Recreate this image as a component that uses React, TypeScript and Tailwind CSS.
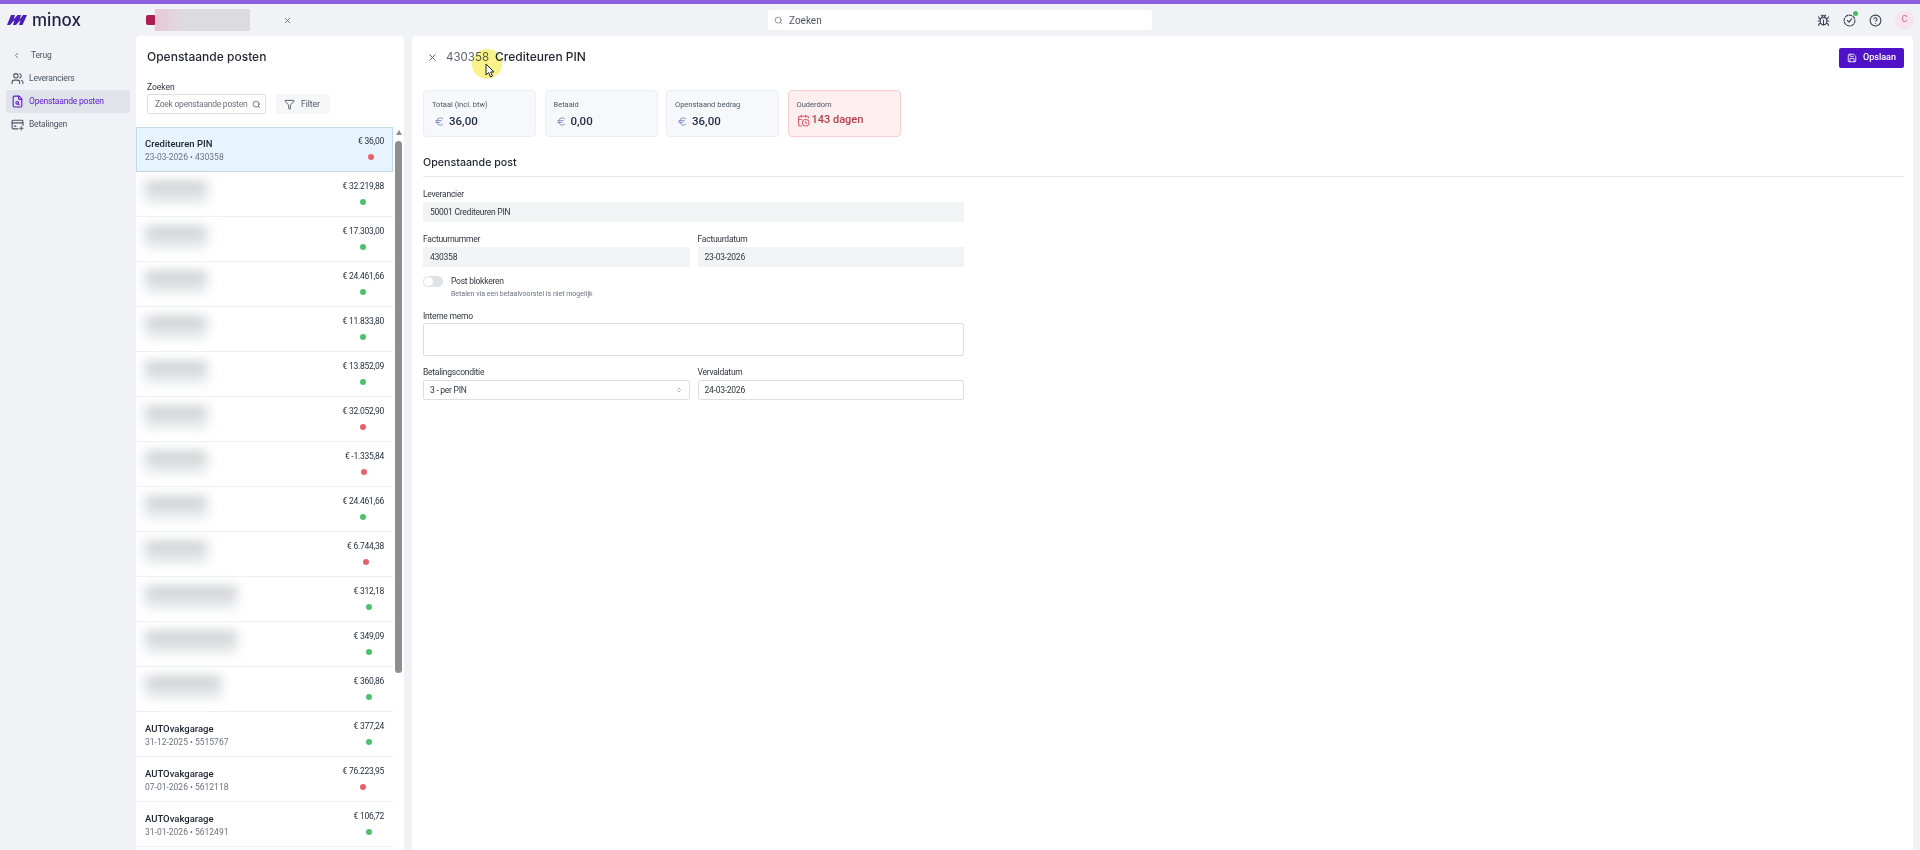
import {
  Bug,
  CalendarClock,
  ChevronLeft,
  ChevronsUpDown,
  CircleHelp,
  Euro,
  FileSearch,
  Funnel,
  Save,
  Search,
  Users,
  X,
} from "lucide-react";

type Row = {
  name?: string;
  sub?: string;
  amount: string;
  ok: boolean;
  blur?: number;
};

const rows: Row[] = [
  { amount: "€ 32.219,88", ok: true, blur: 62 },
  { amount: "€ 17.303,00", ok: true, blur: 62 },
  { amount: "€ 24.461,66", ok: true, blur: 62 },
  { amount: "€ 11.833,80", ok: true, blur: 62 },
  { amount: "€ 13.852,09", ok: true, blur: 62 },
  { amount: "€ 32.052,90", ok: false, blur: 62 },
  { amount: "€ -1.335,84", ok: false, blur: 62 },
  { amount: "€ 24.461,66", ok: true, blur: 62 },
  { amount: "€ 6.744,38", ok: false, blur: 62 },
  { amount: "€ 312,18", ok: true, blur: 92 },
  { amount: "€ 349,09", ok: true, blur: 92 },
  { amount: "€ 360,86", ok: true, blur: 76 },
  { name: "AUTOvakgarage", sub: "31-12-2025 • 5515767", amount: "€ 377,24", ok: true },
  { name: "AUTOvakgarage", sub: "07-01-2026 • 5612118", amount: "€ 76.223,95", ok: false },
  { name: "AUTOvakgarage", sub: "31-01-2026 • 5612491", amount: "€ 106,72", ok: true },
];

function Amount({ value, ok }: { value: string; ok: boolean }) {
  return (
    <div className="flex flex-col items-center gap-[7px] pt-[1px]">
      <span className="text-[8.5px] leading-[12px] text-[#27303f] tracking-[-0.25px]">{value}</span>
      <span className={`w-[6px] h-[6px] rounded-full ${ok ? "bg-[#4fbf6c]" : "bg-[#e8606c]"}`} />
    </div>
  );
}

function ListRow({ row }: { row: Row }) {
  return (
    <div className="h-[45px] shrink-0 flex justify-between pl-[9px] pr-[9px] pt-[7px] border-b border-[#eef0f3] bg-white">
      {row.name ? (
        <div className="pt-[3px]">
          <div className="text-[9.5px] leading-[14px] font-medium text-[#1b2230]">{row.name}</div>
          <div className="text-[8.5px] leading-[13px] text-[#6b7280]">{row.sub}</div>
        </div>
      ) : (
        <div className="pt-[3px] blur-[6px] opacity-80" style={{ width: row.blur }}>
          <div className="h-[9px] bg-[#b5b7ba]" />
          <div className="h-[8px] mt-[3px] bg-[#d3d5d8]" />
        </div>
      )}
      <Amount value={row.amount} ok={row.ok} />
    </div>
  );
}

function Stat({ label, value }: { label: string; value: string }) {
  return (
    <div className="w-[113px] h-[47px] rounded-[4px] border border-[#eceef3] bg-[#f7f8fb] pl-[8px] pt-[9px]">
      <div className="text-[7.5px] leading-[10px] text-[#4b5563]">{label}</div>
      <div className="flex items-center gap-[4px] pl-[2px] mt-[3px]">
        <Euro size={11} className="text-[#7b8fc0]" />
        <span className="text-[11.5px] leading-[16px] font-medium text-[#1f2b45]">{value}</span>
      </div>
    </div>
  );
}

function Label({ children }: { children: string }) {
  return <div className="text-[8.5px] leading-[12px] tracking-[-0.25px] text-[#30363f]">{children}</div>;
}

function ReadOnly({ label, value }: { label: string; value: string }) {
  return (
    <div className="flex-1">
      <Label>{label}</Label>
      <div className="mt-[2px] bg-[#f2f3f5] pl-[7px] text-[8.5px] tracking-[-0.25px] text-[#30363f] h-[20px] leading-[20px]">{value}</div>
    </div>
  );
}

export default function App() {
  return (
    <div className="relative h-[850px] overflow-hidden bg-[#f1f2f6] flex flex-col font-['Roboto','Liberation_Sans',sans-serif]">
      <div className="h-[4px] bg-[#8b5fe0]" />

      <header className="h-[32px] flex items-center shrink-0 relative">
        <div className="w-[146px] pl-[7px] flex items-center gap-[5px]">
          <svg width="20" height="10" viewBox="0 0 20 10">
            <path d="M0 10 L4 0 H8 L6.5 4.5 L10.5 0 H14 L12.5 4.5 L16 0 H20 L15.5 10 H12 L13.5 5 L9 10 H6 L7.5 5 L3 10 Z" fill="#4a1fb8" />
          </svg>
          <span className="text-[17px] leading-[20px] font-['Inter'] font-medium text-[#1d2340]">minox</span>
        </div>
        <div className="w-[10px] h-[10px] rounded-[2px] bg-[#a81f4f]" />
        <div className="w-[95px] h-[22px] ml-[-1px] bg-gradient-to-r from-[#e8c8d4] to-[#dcdcde] to-30%" />
        <X size={9} className="ml-[33px] text-[#4b5563]" />
        <div className="absolute left-[768px] top-[6px] w-[384px] h-[20px] bg-white rounded-[2px] flex items-center pl-[6px] gap-[6px]">
          <Search size={9} className="text-[#6b7280]" />
          <span className="text-[10px] text-[#4b5563]">Zoeken</span>
        </div>
        <div className="ml-auto flex items-center gap-[13px] pr-[6px]">
          <Bug size={13} className="text-[#3b4252]" />
          <div className="relative">
            <svg width="13" height="13" viewBox="0 0 24 24" fill="none" stroke="#3b4252" strokeWidth="2" strokeLinecap="round" strokeLinejoin="round">
              <circle cx="12" cy="12" r="10" strokeDasharray="5 2.5" />
              <path d="M8 12l3 3 5-6" />
            </svg>
            <span className="absolute -top-[3px] -right-[2px] w-[5px] h-[5px] rounded-full bg-[#3fc060]" />
          </div>
          <CircleHelp size={13} className="text-[#3b4252]" />
          <div className="w-[19px] h-[19px] rounded-full bg-[#f7e4ea] text-[#d86a88] text-[9px] flex items-center justify-center">C</div>
        </div>
      </header>

      <div className="flex flex-1 min-h-0">
        <nav className="w-[136px] shrink-0 pl-[6px] pr-[6px] pt-[8px] text-[8.5px] tracking-[-0.2px] text-[#4b5563]">
          <div className="h-[23px] flex items-center gap-[10px] pl-[6px]">
            <ChevronLeft size={9} />
            <span>Terug</span>
          </div>
          <div className="h-[23px] flex items-center gap-[5px] pl-[5px]">
            <Users size={13} />
            <span>Leveranciers</span>
          </div>
          <div className="h-[23px] flex items-center gap-[5px] pl-[5px] bg-[#e1e3ea] rounded-[2px] text-[#5b21c8]">
            <FileSearch size={13} />
            <span>Openstaande posten</span>
          </div>
          <div className="h-[23px] flex items-center gap-[5px] pl-[5px]">
            <svg width="13" height="13" viewBox="0 0 24 24" fill="none" stroke="currentColor" strokeWidth="2" strokeLinecap="round" strokeLinejoin="round">
              <path d="M13 20H4a2 2 0 0 1-2-2V6a2 2 0 0 1 2-2h16a2 2 0 0 1 2 2v8" />
              <path d="M2 9h20M6 15h3M19 16v6M16 19h6" />
            </svg>
            <span>Betalingen</span>
          </div>
        </nav>

        <section className="w-[268px] shrink-0 bg-white rounded-t-[4px] flex flex-col min-h-0">
          <div className="h-[91px] shrink-0 pl-[11px]">
            <h1 className="pt-[12px] text-[12px] leading-[18px] font-['Inter'] font-medium text-[#1f2430]">Openstaande posten</h1>
            <div className="text-[8.5px] leading-[12px] text-[#30363f] mt-[15px]">Zoeken</div>
            <div className="flex items-center gap-[10px] mt-[1px]">
              <div className="w-[119px] h-[20px] border border-[#dcdfe4] rounded-[2px] flex items-center justify-between pl-[7px] pr-[4px]">
                <span className="text-[8.5px] tracking-[-0.25px] text-[#6b7280] whitespace-nowrap">Zoek openstaande posten</span>
                <Search size={9} className="text-[#4b5563]" />
              </div>
              <div className="w-[54px] h-[20px] bg-[#f6f7f9] rounded-[2px] flex items-center gap-[6px] pl-[8px]">
                <Funnel size={11} className="text-[#4b5563]" />
                <span className="text-[8.5px] text-[#4b5563]">Filter</span>
              </div>
            </div>
          </div>
          <div className="flex flex-1 min-h-0 overflow-hidden">
            <div className="w-[257px] shrink-0 flex flex-col">
              <div className="h-[45px] shrink-0 flex justify-between pl-[8px] pr-[8px] pt-[6px] bg-[#e8f4fd] border border-[#c2d9ea]">
                <div className="pt-[3px]">
                  <div className="text-[9.5px] leading-[14px] font-medium text-[#1b2230]">Crediteuren PIN</div>
                  <div className="text-[8.5px] leading-[13px] text-[#6b7280]">23-03-2026 • 430358</div>
                </div>
                <Amount value="€ 36,00" ok={false} />
              </div>
              {rows.map((row, i) => (
                <ListRow key={i} row={row} />
              ))}
            </div>
            <div className="flex-1 relative">
              <div className="mt-[3px] w-0 h-0 border-x-[3px] border-x-transparent border-b-[5px] border-b-[#8e8e8e] ml-[3px]" />
              <div className="absolute left-[2px] top-[14px] w-[7px] h-[532px] bg-[#8e8e8e] rounded-full" />
            </div>
          </div>
        </section>

        <main className="ml-[8px] mr-[7px] flex-1 bg-white rounded-t-[4px] pl-[11px] pr-[9px] relative">
          <div className="h-[54px] flex items-start justify-between">
            <div className="flex items-center pt-[12px] text-[12px] leading-[18px] font-['Inter']">
              <X size={11} className="text-[#4b5563] ml-[4px] mr-[8px]" />
              <span className="text-[#5b6270] mr-[6px] text-[11.5px]">430358</span>
              <span className="font-medium text-[#1f2430]">Crediteuren PIN</span>
            </div>
            <button className="mt-[12px] w-[65px] h-[20px] rounded-[2px] bg-[#4f12c9] text-white flex items-center justify-center gap-[6px] text-[9px] font-medium">
              <Save size={10} />
              Opslaan
            </button>
          </div>

          <div className="flex gap-[8.5px]">
            <Stat label="Totaal (incl. btw)" value="36,00" />
            <Stat label="Betaald" value="0,00" />
            <Stat label="Openstaand bedrag" value="36,00" />
            <div className="w-[113px] h-[47px] rounded-[4px] border border-[#f6cfd2] bg-[#fdeff0] pl-[8px] pt-[9px]">
              <div className="text-[7.5px] leading-[10px] text-[#4b5563]">Ouderdom</div>
              <div className="flex items-center gap-[2px] mt-[2px]">
                <CalendarClock size={13} className="text-[#e0566a]" />
                <span className="text-[11px] leading-[16px] font-medium text-[#b8404a]">143 dagen</span>
              </div>
            </div>
          </div>

          <h2 className="mt-[18px] text-[10.7px] leading-[16px] font-['Inter'] font-medium text-[#1f2430]">Openstaande post</h2>
          <div className="h-px bg-[#e7e8eb] mt-[5px]" />

          <div className="w-[541px] mt-[11px]">
            <ReadOnly label="Leverancier" value="50001 Crediteuren PIN" />
            <div className="flex gap-[8px] mt-[11px]">
              <ReadOnly label="Factuurnummer" value="430358" />
              <ReadOnly label="Factuurdatum" value="23-03-2026" />
            </div>
            <div className="flex gap-[8px] mt-[8px]">
              <div className="w-[20px] h-[11px] mt-[1px] rounded-full bg-[#dfe1e5] p-[1px]">
                <div className="w-[9px] h-[9px] rounded-full bg-white" />
              </div>
              <div>
                <div className="text-[8.5px] tracking-[-0.25px] leading-[12px] text-[#30363f]">Post blokkeren</div>
                <div className="text-[7px] leading-[10px] mt-[2px] text-[#6b7280]">Betalen via een betaalvoorstel is niet mogelijk</div>
              </div>
            </div>
            <div className="mt-[11px]">
              <Label>Interne memo</Label>
              <div className="h-[33px] mt-[1px] border border-[#dcdfe4] rounded-[2px]" />
            </div>
            <div className="flex gap-[8px] mt-[10px]">
              <div className="flex-1">
                <Label>Betalingsconditie</Label>
                <div className="h-[20px] mt-[2px] border border-[#dcdfe4] rounded-[2px] flex items-center justify-between pl-[6px] pr-[7px] text-[8.5px] tracking-[-0.25px] text-[#30363f]">
                  3 - per PIN
                  <ChevronsUpDown size={6} className="text-[#6b7280]" />
                </div>
              </div>
              <div className="flex-1">
                <Label>Vervaldatum</Label>
                <div className="h-[20px] mt-[2px] border border-[#dcdfe4] rounded-[2px] flex items-center pl-[6px] text-[8.5px] tracking-[-0.25px] text-[#30363f]">24-03-2026</div>
              </div>
            </div>
          </div>
        </main>
      </div>

      {/* cursor highlight from the recording */}
      <div className="absolute left-[472px] top-[49px] w-[30px] h-[30px] rounded-full bg-[#f5e73a]/60 mix-blend-multiply" />
      <svg className="absolute left-[485px] top-[63px]" width="11" height="15" viewBox="0 0 11 15">
        <path d="M1 1 V12 L3.5 9.5 L5.5 14 L7.5 13 L5.5 9 H9 Z" fill="white" stroke="#222" strokeWidth="1" />
      </svg>
    </div>
  );
}
